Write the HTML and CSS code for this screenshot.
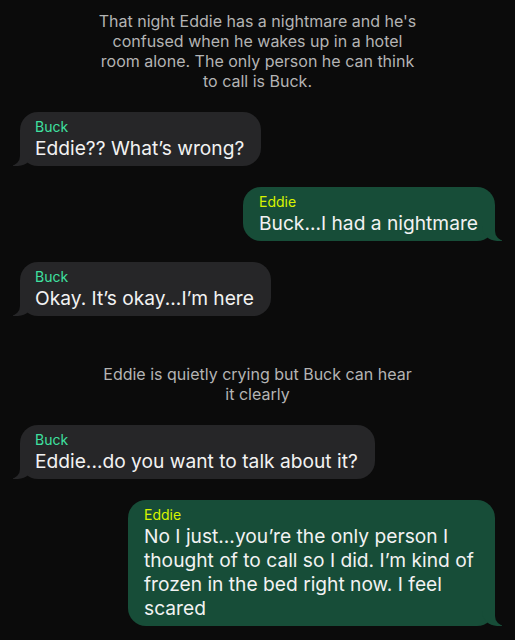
FILE: index.html
```html
<!DOCTYPE html>
<html lang="en">
<head>
  <meta charset="UTF-8" />
  <meta name="viewport" content="width=device-width, initial-scale=1.0"/>
  <title>Buck &amp; Eddie</title>
  <link rel="stylesheet" href="styles.css">
</head>
<body>

  <main class="chat">
    <p class="narration narration-first">That night Eddie has a nightmare and he's confused when he wakes up in a hotel room alone. The only person he can think to call is Buck.</p>

    <div class="bubble buck">
      <span class="name">Buck</span>
      <span class="text">Eddie?? What’s wrong?</span>
    </div>

    <div class="bubble eddie">
      <span class="name">Eddie</span>
      <span class="text">Buck...I had a nightmare</span>
    </div>

    <div class="bubble buck">
      <span class="name">Buck</span>
      <span class="text">Okay. It’s okay...I’m here</span>
    </div>

    <p class="narration narration-second">Eddie is quietly crying but Buck can hear<br>it clearly</p>

    <div class="bubble buck">
      <span class="name">Buck</span>
      <span class="text">Eddie...do you want to talk about it?</span>
    </div>

    <div class="bubble eddie">
      <span class="name">Eddie</span>
      <span class="text">No I just...you’re the only person I thought of to call so I did. I’m kind of frozen in the bed right now. I feel scared</span>
    </div>
  </main>

</body>
</html>
```

FILE: styles.css
```css
body {
  margin: 0;
  background: #0b0b0b;
  font-family: Inter, "Noto Sans", sans-serif;
  color: #f2f2f2;
}

.chat {
  display: flex;
  flex-direction: column;
  padding: 11px 20px 0;
}

.narration {
  align-self: center;
  max-width: 326px;
  margin: 0;
  text-align: center;
  font-size: 16px;
  line-height: 20px;
  color: #b4b4b4;
}

.narration-first {
  margin-bottom: 21px;
}

.narration-second {
  margin-top: 27px;
  margin-bottom: 21px;
}

.bubble {
  position: relative;
  display: flex;
  flex-direction: column;
  max-width: 334px;
  padding: 5px 17px 6px 15px;
  border-radius: 18px;
  margin-bottom: 21px;
}

.bubble .name {
  font-size: 14px;
  line-height: 19px;
}

.bubble .text {
  font-size: 19.2px;
  line-height: 24px;
}

.buck {
  align-self: flex-start;
  background: #262628;
}

.buck .name {
  color: #3fe0a0;
}

.eddie {
  align-self: flex-end;
  padding-left: 16px;
  padding-right: 17px;
  background: #174d38;
}

.eddie .name {
  color: #d8f400;
}

/* little tails at the bottom corner */
.bubble::before,
.bubble::after {
  content: "";
  position: absolute;
  bottom: 0;
  height: 18px;
}

.buck::before {
  left: -7px;
  width: 20px;
  background: #262628;
  border-bottom-right-radius: 15px;
}

.buck::after {
  left: -10px;
  width: 10px;
  background: #0b0b0b;
  border-bottom-right-radius: 10px;
}

.eddie::before {
  right: -7px;
  width: 20px;
  background: #174d38;
  border-bottom-left-radius: 15px;
}

.eddie::after {
  right: -10px;
  width: 10px;
  background: #0b0b0b;
  border-bottom-left-radius: 10px;
}
```
